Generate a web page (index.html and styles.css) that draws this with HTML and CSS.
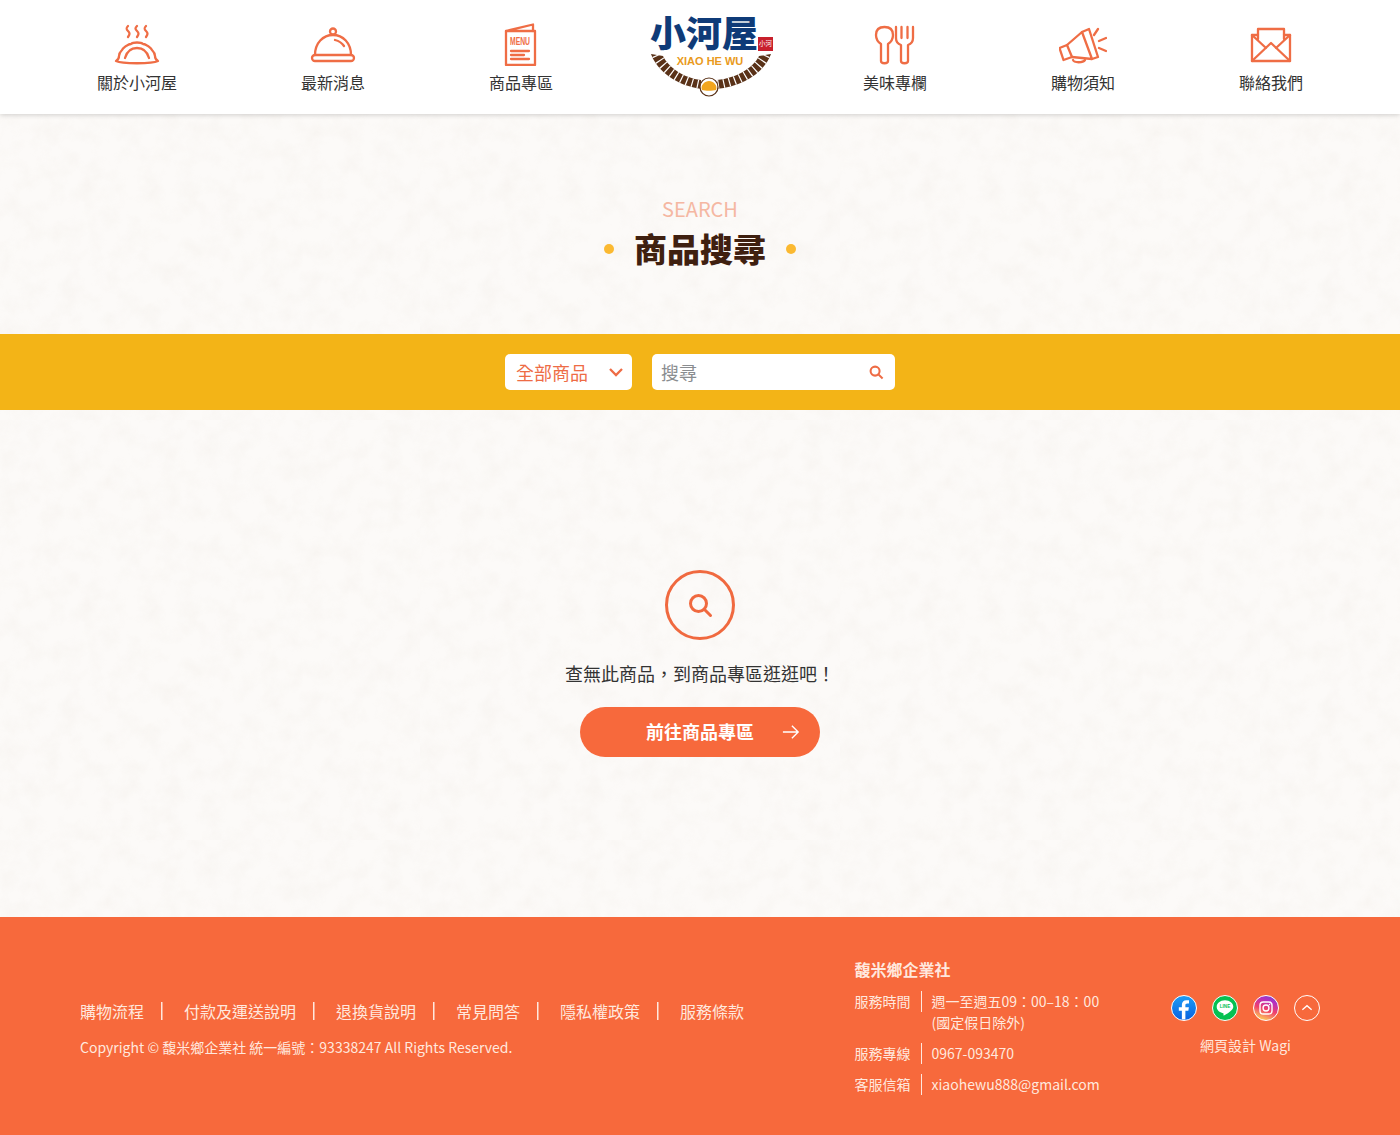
FILE: index.html
```html
<!DOCTYPE html>
<html lang="zh-Hant">
<head>
    <meta charset="UTF-8">
    <title>商品搜尋 - 小河屋</title>
    <link rel="stylesheet" href="styles.css">
</head>
<body>
    <header class="site-header">
        <nav class="nav-group">
            <a class="nav-item" href="#">
                <svg class="nav-icon" viewBox="0 0 48 44">
                    <path d="M15 4c-2 2-2 3 0 5s2 3 0 6M24 4c-2 2-2 3 0 5s2 3 0 6M33 4c-2 2-2 3 0 5s2 3 0 6"/>
                    <path d="M3 39c2-1 3-3 3-5 0-3 2-5 3-6 1-2 3-3 4-4 2-1 3-2 5-2 2-2 10-2 12 0 2 0 3 1 5 2 1 1 3 2 4 4 1 1 3 3 3 6 0 2 1 4 3 5-6 3-36 3-42 0z"/>
                    <path d="M12 36c2-7 7-10 12-10s10 3 12 10"/>
                </svg>
                <span>關於小河屋</span>
            </a>
            <a class="nav-item" href="#">
                <svg class="nav-icon" viewBox="0 0 48 44">
                    <circle cx="24" cy="9.500" r="3"/>
                    <path d="M6 33c0-12 8-20 18-20s18 8 18 20"/>
                    <path d="M26 18c4 1 7 3 9 6"/>
                    <rect x="3" y="33" width="42" height="6" rx="3"/>
                </svg>
                <span>最新消息</span>
            </a>
            <a class="nav-item" href="#">
                <svg class="nav-icon" viewBox="0 0 48 44">
                    <path d="M9 9v34h29V9h-2"/>
                    <path d="M9 9l27-6.500V9H9z"/>
                    <text class="menu-word" x="13" y="23" textLength="20" lengthAdjust="spacingAndGlyphs">MENU</text>
                    <path d="M14 29h18M14 33h13M14 37h18"/>
                </svg>
                <span>商品專區</span>
            </a>
        </nav>

        <a class="logo" href="#">
            <svg class="logo-mark" viewBox="0 -10 124 92">
                <defs>
                    <clipPath id="ropeClip">
                        <path d="M2 38C8 55 28 70 53 73L52 64C35 62 20 52 14 40zM122 38C116 55 96 70 67 73L68 64C88 62 104 52 110 40z"/>
                    </clipPath>
                </defs>
                <g class="logo-name">
                    <text x="1" y="31">小</text>
                    <text x="37" y="31">河</text>
                    <text x="73" y="31">屋</text>
                </g>
                <rect class="logo-stamp" x="109" y="21" width="15" height="14"/>
                <text class="logo-stamp-text" x="116.500" y="30" text-anchor="middle">小河</text>
                <path class="rope" d="M2 38C8 55 28 70 53 73L52 64C35 62 20 52 14 40zM122 38C116 55 96 70 67 73L68 64C88 62 104 52 110 40z"/>
                <g clip-path="url(#ropeClip)">
                    <path class="rope-twist" d="M8 39C14 53 32 66 53 69M116 39C110 53 92 66 67 69"/>
                </g>
                <text class="logo-latin" x="61" y="49" text-anchor="middle">XIAO HE WU</text>
                <circle class="logo-seal" cx="60" cy="71" r="9"/>
                <path class="logo-bun" d="M53 74c-2-5 3-9 7-9s9 4 7 9c-3 1-11 1-14 0z"/>
            </svg>
        </a>

        <nav class="nav-group">
            <a class="nav-item" href="#">
                <svg class="nav-icon" viewBox="0 0 48 44">
                    <path d="M10 22c-3-2-5-5-5-9 0-5 3-8 8.500-8s8.500 3 8.500 8c0 4-2 7-5 9v17c0 3-7 3-7 0z"/>
                    <path d="M25 5v11c0 4 2 6 5 7v16c0 3 7 3 7 0V23c3-1 5-3 5-7V5M30.500 5v11M36.500 5v11"/>
                </svg>
                <span>美味專欄</span>
            </a>
            <a class="nav-item" href="#">
                <svg class="nav-icon" viewBox="0 0 48 44">
                    <path d="M.5 26L8 23l5 12-8.500 3z"/>
                    <path d="M8 23L23 10l10 27-20-2"/>
                    <path d="M23 10l7-3 9 28-6 2"/>
                    <path d="M14 38c1 3 10 3 12 0"/>
                    <path d="M35 13l4-6M40 19l7-3M40 26l7 3"/>
                </svg>
                <span>購物須知</span>
            </a>
            <a class="nav-item" href="#">
                <svg class="nav-icon" viewBox="0 0 48 44">
                    <path d="M11 13H5v26h38V13h-6"/>
                    <path d="M11 17V7h26v10"/>
                    <path d="M5 13l14 13M43 13L29 26M5 39l19-18 19 18"/>
                </svg>
                <span>聯絡我們</span>
            </a>
        </nav>
    </header>

    <main>
        <section class="page-title">
            <p class="title-en">SEARCH</p>
            <h1><span>商品搜尋</span></h1>
        </section>

        <section class="search-bar">
            <div class="select-box">
                <span>全部商品</span>
                <svg viewBox="0 0 16 10"><path d="M2 2l6 6 6-6"/></svg>
            </div>
            <div class="search-box">
                <input type="text" placeholder="搜尋">
                <svg viewBox="0 0 16 16"><circle cx="6.500" cy="6.500" r="4.800"/><path d="M10 10l4.500 4.500"/></svg>
            </div>
        </section>

        <section class="empty-state">
            <div class="empty-icon">
                <svg viewBox="0 0 26 26"><circle cx="11.500" cy="11.500" r="8"/><path d="M17.500 17.500l6 6"/></svg>
            </div>
            <p>查無此商品，到商品專區逛逛吧！</p>
            <a class="go-btn" href="#">
                <span>前往商品專區</span>
                <svg viewBox="0 0 20 16"><path d="M1 8h17M11 1l7 7-7 7"/></svg>
            </a>
        </section>
    </main>

    <footer class="site-footer">
        <div class="footer-left">
            <ul class="footer-links">
                <li><a href="#">購物流程</a></li>
                <li><a href="#">付款及運送說明</a></li>
                <li><a href="#">退換貨說明</a></li>
                <li><a href="#">常見問答</a></li>
                <li><a href="#">隱私權政策</a></li>
                <li><a href="#">服務條款</a></li>
            </ul>
            <p class="copyright">Copyright © 馥米鄉企業社 統一編號：93338247 All Rights Reserved.</p>
        </div>

        <div class="footer-info">
            <h2>馥米鄉企業社</h2>
            <dl>
                <div class="info-row">
                    <dt>服務時間</dt>
                    <dd>週一至週五09：00–18：00<br>(國定假日除外)</dd>
                </div>
                <div class="info-row">
                    <dt>服務專線</dt>
                    <dd>0967-093470</dd>
                </div>
                <div class="info-row">
                    <dt>客服信箱</dt>
                    <dd>xiaohewu888@gmail.com</dd>
                </div>
            </dl>
        </div>

        <div class="footer-social">
            <div class="social-icons">
                <a class="social fb" href="#">
                    <svg viewBox="0 0 26 26"><path d="M14.500 25.500V16h3.200l.6-3.800h-3.800V10c0-1.200.5-2 2.100-2h1.800V4.700c-.7-.1-1.700-.2-2.800-.2-3 0-4.900 1.800-4.900 5v2.700H7.400V16h3.300v9.500z"/></svg>
                </a>
                <a class="social line" href="#">
                    <svg viewBox="0 0 26 26">
                        <path d="M13 4.500c-5.300 0-9 3.200-9 7.200 0 3.500 3 6.300 6.900 6.900.8.200.6.800.4 2 0 .5.200.7 1 .3 2-1.100 9.700-5 9.700-9.200 0-4-3.700-7.200-9-7.200z"/>
                        <text x="13" y="13.500" text-anchor="middle">LINE</text>
                    </svg>
                </a>
                <a class="social ig" href="#">
                    <svg viewBox="0 0 26 26">
                        <rect x="6.500" y="6.500" width="13" height="13" rx="3.500"/>
                        <circle cx="13" cy="13" r="3.200"/>
                        <circle class="ig-dot" cx="16.800" cy="9.200" r=".8"/>
                    </svg>
                </a>
                <a class="social to-top" href="#">
                    <svg viewBox="0 0 26 26"><path d="M8 15l5-4.500 5 4.500"/></svg>
                </a>
            </div>
            <p class="credit">網頁設計 Wagi</p>
        </div>
    </footer>
</body>
</html>
```

FILE: styles.css
```css
* {
    box-sizing: border-box;
}

body {
    margin: 0;
    font-family: "Noto Sans CJK TC", "Noto Sans", sans-serif;
    color: #333;
    background-color: #fcfaf8;
    background-image: url("data:image/svg+xml,%3Csvg xmlns='http://www.w3.org/2000/svg' width='420' height='420'%3E%3Cfilter id='n'%3E%3CfeTurbulence type='fractalNoise' baseFrequency='.05' numOctaves='4' stitchTiles='stitch'/%3E%3CfeColorMatrix values='0 0 0 0 .6 0 0 0 0 .52 0 0 0 0 .42 .14 0 0 0 -.055'/%3E%3C/filter%3E%3Crect width='420' height='420' filter='url(%23n)'/%3E%3C/svg%3E");
}

a {
    color: inherit;
    text-decoration: none;
}

p, h1, h2, ul, dl, dd {
    margin: 0;
    padding: 0;
}

/* header */
.site-header {
    position: relative;
    display: flex;
    align-items: flex-start;
    height: 114px;
    padding: 0 97px;
    background: #fff;
    box-shadow: 0 1px 5px rgba(0, 0, 0, 0.18);
}

.nav-group {
    display: flex;
    gap: 124px;
    padding-top: 22px;
}

.nav-item {
    display: flex;
    flex-direction: column;
    align-items: center;
    font-size: 16px;
    line-height: 24px;
    gap: 4px;
}

.nav-icon {
    width: 48px;
    height: 44px;
    fill: none;
    stroke: #ef6d45;
    stroke-width: 2.3;
    stroke-linejoin: round;
    stroke-linecap: round;
}

.menu-word {
    font-family: "Liberation Sans", sans-serif;
    font-size: 10px;
    font-weight: 700;
    fill: #ef6d45;
    stroke: none;
}

.logo {
    flex: 1;
    display: flex;
    justify-content: center;
    padding: 6px 0 0 5px;
}

.logo-mark {
    display: block;
    width: 124px;
    height: 92px;
}

.logo-name text {
    font-size: 36px;
    font-weight: 900;
    fill: #0f3b78;
}

.logo-stamp {
    fill: #c8202c;
}

.logo-stamp-text {
    font-size: 6.500px;
    fill: #fff;
}

.logo-latin {
    font-family: "Liberation Sans", sans-serif;
    font-size: 11px;
    font-weight: 700;
    fill: #e99a1c;
}

.rope {
    fill: #5a3218;
}

.rope-twist {
    fill: none;
    stroke: #fff;
    stroke-width: 14;
    stroke-dasharray: 1.200 4.500;
}

.logo-seal {
    fill: #fff;
    stroke: #5a3218;
    stroke-width: 1.200;
}

.logo-bun {
    fill: #f2a51e;
}

/* title */
.page-title {
    height: 220px;
    padding-top: 83px;
    text-align: center;
}

.title-en {
    font-size: 20px;
    line-height: 24px;
    color: #f5b7a2;
}

.page-title h1 {
    display: flex;
    justify-content: center;
    align-items: center;
    gap: 20px;
    margin-top: 3px;
    font-size: 33px;
    line-height: 48px;
    font-weight: 900;
    color: #3f2010;
}

.page-title h1::before,
.page-title h1::after {
    content: "";
    position: relative;
    top: 1px;
    width: 10px;
    height: 10px;
    border-radius: 50%;
    background: #fbb931;
}

/* search bar */
.search-bar {
    display: flex;
    justify-content: center;
    gap: 20px;
    height: 76px;
    padding-top: 20px;
    background: #f3b417;
}

.select-box,
.search-box {
    display: flex;
    align-items: center;
    justify-content: space-between;
    height: 36px;
    border-radius: 5px;
    background: #fff;
}

.select-box {
    width: 127px;
    padding: 0 8px 0 11px;
    font-size: 18px;
    color: #ee6c45;
}

.select-box svg {
    width: 16px;
    height: 10px;
    fill: none;
    stroke: #ee6c45;
    stroke-width: 2.300;
}

.search-box {
    width: 243px;
    padding: 0 11px 0 9px;
}

.search-box input {
    width: 190px;
    padding: 0;
    border: 0;
    outline: none;
    font-family: inherit;
    font-size: 18px;
    background: transparent;
}

.search-box input::placeholder {
    color: #8a8d90;
}

.search-box svg {
    width: 15px;
    height: 15px;
    fill: none;
    stroke: #ee6c45;
    stroke-width: 2.200;
}

/* empty result */
.empty-state {
    display: flex;
    flex-direction: column;
    align-items: center;
    height: 507px;
    padding-top: 160px;
}

.empty-icon {
    display: flex;
    align-items: center;
    justify-content: center;
    width: 70px;
    height: 70px;
    border: 3px solid #f0693f;
    border-radius: 50%;
}

.empty-icon svg {
    width: 26px;
    height: 26px;
    fill: none;
    stroke: #f0693f;
    stroke-width: 3;
    stroke-linecap: round;
}

.empty-state p {
    margin-top: 20px;
    font-size: 18px;
    line-height: 27px;
}

.go-btn {
    position: relative;
    display: flex;
    justify-content: center;
    align-items: center;
    width: 240px;
    height: 50px;
    margin-top: 20px;
    padding-bottom: 2px;
    border-radius: 25px;
    background: #f7693c;
    color: #fff;
    font-size: 18px;
    font-weight: 700;
}

.go-btn svg {
    position: absolute;
    right: 20px;
    top: 17px;
    width: 18px;
    height: 16px;
    fill: none;
    stroke: #fff;
    stroke-width: 1.500;
}

/* footer */
.site-footer {
    display: flex;
    height: 218px;
    padding: 0 80px;
    background: #f7693c;
    color: #ffe8de;
}

.footer-left {
    width: 774.500px;
    padding-top: 82px;
}

.footer-links {
    display: flex;
    list-style: none;
    font-size: 16px;
    line-height: 24px;
}

.footer-links li + li {
    margin-left: 17px;
    padding-left: 23px;
    background: linear-gradient(#ffe8de, #ffe8de) no-repeat 0 3px / 1.500px 18px;
}

.copyright {
    margin-top: 12px;
    font-size: 14px;
    line-height: 24px;
}

.footer-info {
    width: 316.500px;
    padding-top: 40px;
    font-size: 14px;
}

.footer-info h2 {
    font-size: 16px;
    line-height: 24px;
    font-weight: 700;
}

.info-row {
    display: flex;
    margin-top: 10px;
    line-height: 21px;
}

.info-row dt {
    width: 67px;
    border-right: 1px solid #ffe8de;
    height: 21px;
}

.info-row dd {
    padding-left: 10px;
}

.footer-social {
    width: 149px;
    padding-top: 78px;
    text-align: center;
}

.social-icons {
    display: flex;
    gap: 15px;
}

.social {
    display: block;
    width: 26px;
    height: 26px;
    border: 1px solid #fff;
    border-radius: 50%;
    overflow: hidden;
}

.social svg {
    display: block;
    width: 100%;
    height: 100%;
}

.fb {
    background: linear-gradient(#1c9cf5, #0a62e0);
}

.fb path {
    fill: #fff;
}

.line {
    background: #06c152;
}

.line path {
    fill: #fff;
}

.line text {
    font-family: "Liberation Sans", sans-serif;
    font-size: 5px;
    font-weight: 700;
    fill: #06c152;
}

.ig {
    background: linear-gradient(20deg, #fdd35a 8%, #f0406a 45%, #b52fc0 75%, #6a4bd6);
}

.ig rect,
.ig circle {
    fill: none;
    stroke: #fff;
    stroke-width: 1.500;
}

.ig .ig-dot {
    fill: #fff;
    stroke: none;
}

.to-top path {
    fill: none;
    stroke: #fff;
    stroke-width: 1.400;
}

.credit {
    margin-top: 14px;
    font-size: 14px;
    line-height: 21px;
}
```
